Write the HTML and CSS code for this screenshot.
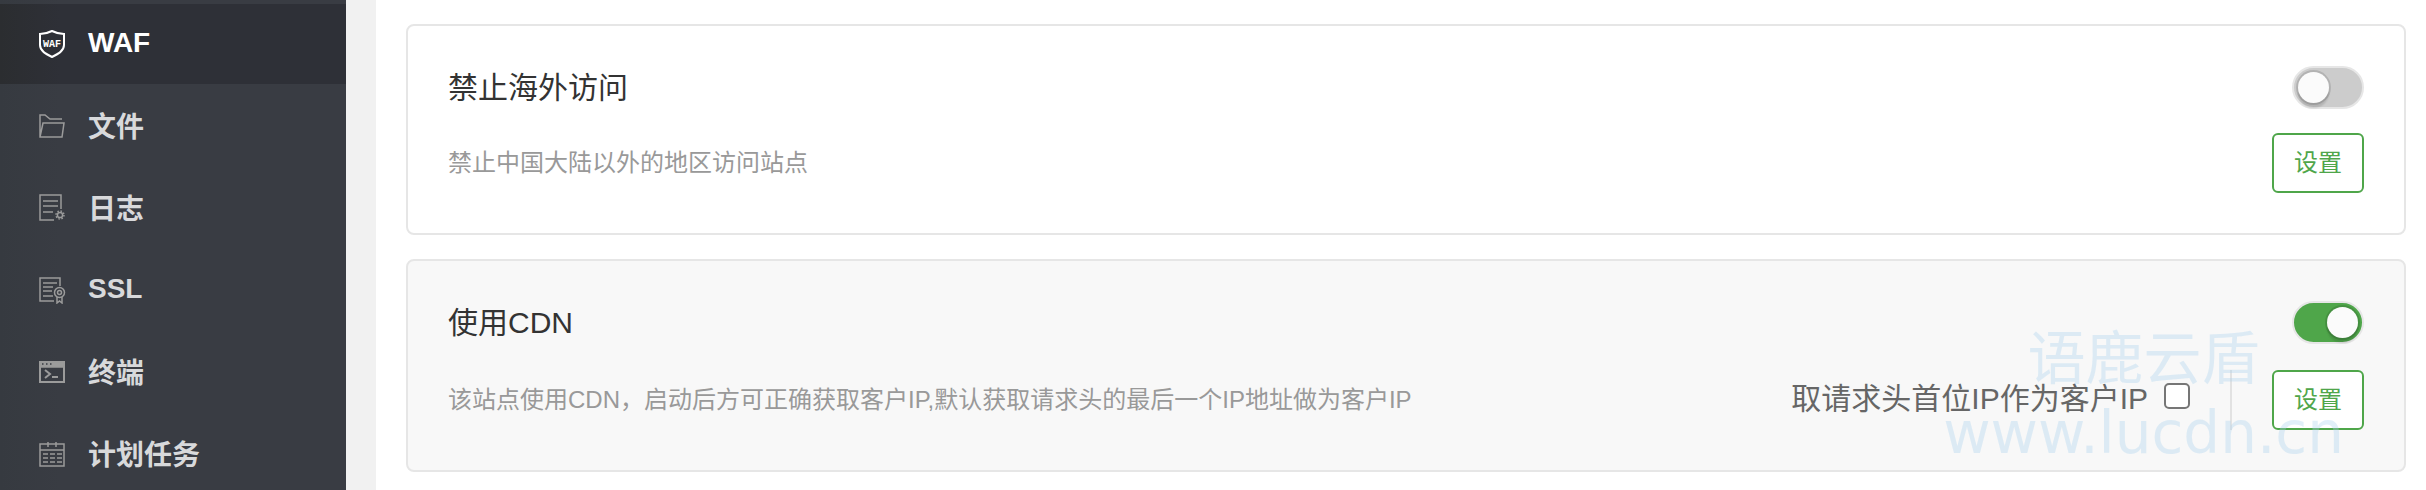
FILE: index.html
```html
<!DOCTYPE html>
<html lang="zh-CN">
<head>
  <meta charset="UTF-8" />
  <meta name="viewport" content="width=device-width, initial-scale=1.0"/>
  <title>WAF</title>
  <link rel="stylesheet" href="styles.css">
</head>
<body>
  <nav class="sidebar">
    <a href="#" class="menu-item active">
      <svg class="menu-icon" viewBox="0 0 28 28">
        <path d="M14 1 C10 3 6 4 2 4 V15 C2 21 8 24 14 27 C20 24 26 21 26 15 V4 C22 4 18 3 14 1 Z" stroke-width="2"/>
        <text x="14" y="17" class="shield-text">WAF</text>
      </svg>
      <span>WAF</span>
    </a>
    <a href="#" class="menu-item">
      <svg class="menu-icon" viewBox="0 0 28 28">
        <path d="M24 7 H12 L7 3 H2 V25 H24 L26 11 H5 L2 25"/>
      </svg>
      <span>文件</span>
    </a>
    <a href="#" class="menu-item">
      <svg class="menu-icon" viewBox="0 0 28 28">
        <path d="M16 26 H2 V1 H23 V15 M5 7 H20 M5 12 H20 M5 18 H15"/>
        <circle cx="22" cy="21" r="2.6"/>
        <circle cx="22" cy="21" r="4" stroke-dasharray="1.5 1.64"/>
      </svg>
      <span>日志</span>
    </a>
    <a href="#" class="menu-item">
      <svg class="menu-icon" viewBox="0 0 28 28">
        <path d="M16 25 H2 V2 H22 V10 M5 7 H19 M5 11 H15 M5 15 H14 M5 20 H15 M19 21 V27 L21.5 25 L24 27 V21"/>
        <circle cx="21.5" cy="16.5" r="5"/>
        <circle cx="21.5" cy="16.5" r="2"/>
      </svg>
      <span>SSL</span>
    </a>
    <a href="#" class="menu-item">
      <svg class="menu-icon" viewBox="0 0 28 28">
        <path d="M2 4 H26 V24 H2 Z" stroke-width="2"/>
        <path d="M2 4 H26 V9 H2 Z" class="fill"/>
        <path d="M7 12 L12 16 L7 20 M14 19 H20" stroke-width="2"/>
        <path d="M4 6 H5.5 M8 6 H9.5 M12 6 H13.5" class="dots"/>
      </svg>
      <span>终端</span>
    </a>
    <a href="#" class="menu-item">
      <svg class="menu-icon" viewBox="0 0 28 28">
        <path d="M2 4 H26 V26 H2 Z M2 10 H26 M10 2 V7 M18 2 V7"/>
        <path d="M5 14 H24 M5 18 H24 M5 22 H24" stroke-dasharray="5 2"/>
      </svg>
      <span>计划任务</span>
    </a>
  </nav>

  <main class="content">
    <section class="card">
      <div class="card-row card-head">
        <h2>禁止海外访问</h2>
        <input type="checkbox" class="switch" aria-label="禁止海外访问">
      </div>
      <div class="card-row">
        <p>禁止中国大陆以外的地区访问站点</p>
        <button type="button" class="btn">设置</button>
      </div>
    </section>

    <section class="card card-cdn">
      <div class="card-row card-head">
        <h2>使用CDN</h2>
        <input type="checkbox" class="switch" aria-label="使用CDN" checked>
      </div>
      <div class="card-row">
        <p>该站点使用CDN，启动后方可正确获取客户IP,默认获取请求头的最后一个IP地址做为客户IP</p>
        <div class="actions">
          <label class="option" for="first-ip">取请求头首位IP作为客户IP
            <input type="checkbox" id="first-ip" class="check">
          </label>
          <span class="divider"></span>
          <button type="button" class="btn">设置</button>
        </div>
      </div>
      <div class="watermark">
        <span>语鹿云盾</span>
        <span class="watermark-url">www.lucdn.cn</span>
      </div>
    </section>
  </main>
</body>
</html>
```
FILE: styles.css
```css
* {
  box-sizing: border-box;
}
body {
  font-family: "Liberation Sans", "Noto Sans CJK SC", sans-serif;
  margin: 0;
  min-height: 100vh;
  display: flex;
  background-color: #f1f1f1;
  overflow: hidden;
}
.sidebar {
  width: 346px;
  flex-shrink: 0;
  padding-top: 4px;
  display: flex;
  flex-direction: column;
  gap: 2px;
  height: 100vh;
  overflow: hidden;
  background: linear-gradient(to right, #363a40, #393c43 60px);
}
.menu-item {
  height: 80px;
  flex-shrink: 0;
  padding-left: 38px;
  display: flex;
  align-items: center;
  gap: 22px;
  color: #d8d9db;
  font-size: 28px;
  font-weight: bold;
  text-decoration: none;
}
.menu-item span {
  padding-bottom: 2px;
}
.menu-item.active {
  color: #fff;
  background: linear-gradient(to right, #2b2d30, #2e3037 60px);
}
.menu-icon {
  width: 28px;
  height: 28px;
  fill: none;
  stroke: #9b9b9b;
  stroke-width: 1.5;
}
.menu-icon .fill {
  fill: #9b9b9b;
}
.menu-icon .dots {
  stroke: #393c43;
}
.active .menu-icon {
  stroke: #fff;
}
.shield-text {
  font-family: "Liberation Mono", monospace;
  font-size: 10px;
  font-weight: bold;
  text-anchor: middle;
  fill: #fff;
  stroke: none;
}

.content {
  flex: 1;
  margin-left: 30px;
  padding: 24px 20px 18px 30px;
  background: #fff;
}
.card {
  position: relative;
  padding: 40px;
  border: 2px solid #e6e6e6;
  border-radius: 8px;
}
.card + .card {
  margin-top: 24px;
}
.card-cdn {
  background: #f8f8f8;
}
.card-row {
  display: flex;
  align-items: center;
  justify-content: space-between;
}
.card-head {
  height: 43px;
  margin-bottom: 24px;
}
.card-cdn .card-head {
  margin-bottom: 26px;
}
h2 {
  margin: 0;
  padding-bottom: 6px;
  color: #333;
  font-size: 30px;
  font-weight: normal;
}
p {
  margin: 0;
  padding-bottom: 6px;
  color: #999;
  font-size: 24px;
}
.btn {
  width: 92px;
  height: 60px;
  padding: 0 0 6px;
  border: 2px solid #4fa64a;
  border-radius: 6px;
  background: #fff;
  color: #4fa64a;
  font-family: inherit;
  font-size: 24px;
}

/* on / off switch */
.switch {
  appearance: none;
  display: flex;
  align-items: center;
  width: 72px;
  height: 43px;
  margin: 0;
  padding: 0 4px;
  border: 2px solid #e6e6e6;
  border-radius: 22px;
  background: #ccc;
}
.switch::before {
  content: "";
  width: 31px;
  height: 31px;
  border-radius: 50%;
  background: #fbfbfb;
  box-shadow: 0 0 0 2px rgba(0, 0, 0, 0.12), 0 5px 2px rgba(0, 0, 0, 0.12);
}
.switch:checked {
  justify-content: flex-end;
  background: #4fa64a;
}

.actions {
  display: flex;
  align-items: center;
}
.option {
  display: flex;
  align-items: center;
  gap: 16px;
  padding-bottom: 8px;
  color: #666;
  font-size: 30px;
}
.check {
  appearance: none;
  width: 26px;
  height: 26px;
  margin: 0;
  border: 2px solid #767676;
  border-radius: 5px;
  background: #fff;
}
.divider {
  width: 2px;
  height: 60px;
  margin: 0 40px;
  background: #e2e2e2;
}

.watermark {
  position: absolute;
  right: 60px;
  bottom: 0;
  display: flex;
  flex-direction: column;
  align-items: center;
  color: rgba(170, 208, 238, 0.35);
  font-size: 58px;
  line-height: 74px;
  pointer-events: none;
}
.watermark-url {
  font-family: "DejaVu Sans", sans-serif;
}
```
